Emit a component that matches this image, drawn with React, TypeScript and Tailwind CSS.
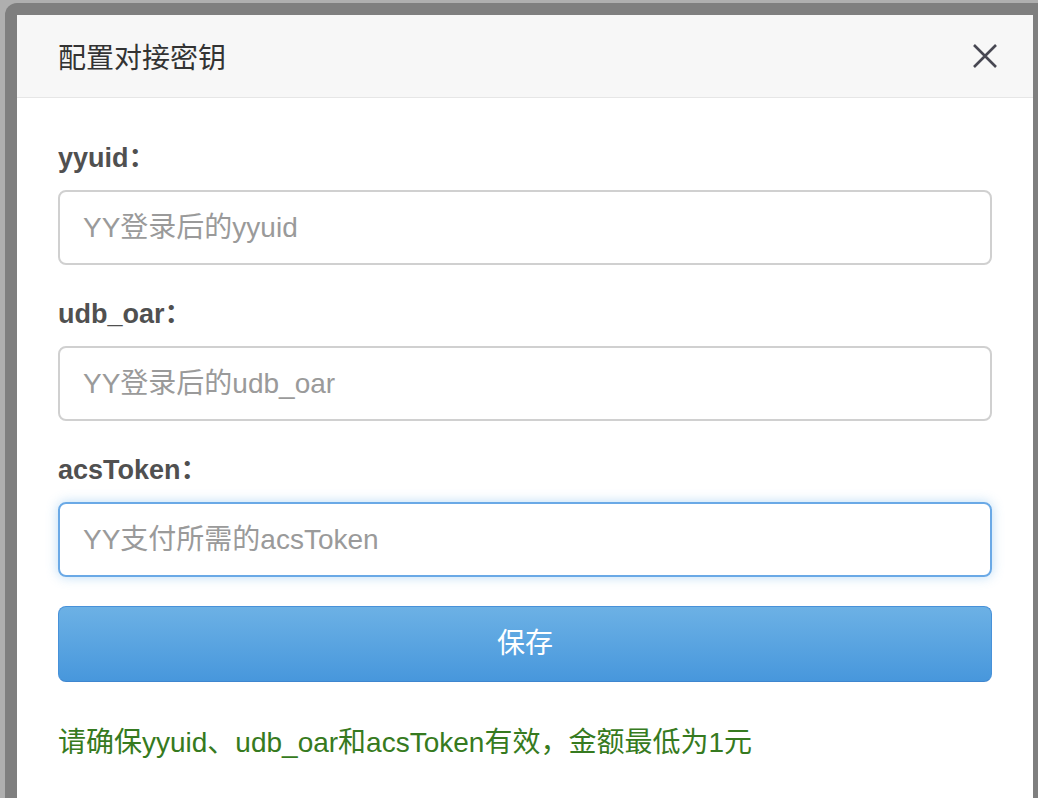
import React from "react";

const fields = [
  { label: "yyuid", placeholder: "YY登录后的yyuid", focused: false },
  { label: "udb_oar", placeholder: "YY登录后的udb_oar", focused: false },
  { label: "acsToken", placeholder: "YY支付所需的acsToken", focused: true },
];

const CloseIcon = () => (
  <svg width="26" height="26" viewBox="0 0 26 26" fill="none">
    <path
      d="M2 2 L24 24 M24 2 L2 24"
      stroke="#474752"
      strokeWidth="2.6"
      strokeLinecap="butt"
    />
  </svg>
);

const App = () => {
  return (
    <div
      className="w-[1038px] h-[798px] overflow-hidden bg-[#afafaf] pl-[5px] pt-[3px]"
      style={{ fontFamily: '"Liberation Sans", "Noto Sans CJK SC", sans-serif' }}
    >
      <div className="h-full bg-[#7f7f7f] rounded-tl-[12px] pl-[12px] pt-[12px] pr-[5px]">
        <div className="h-full bg-white">
          <div className="h-[83px] bg-[#f7f7f7] border-b border-[#e6e6e6] flex items-center justify-between pl-[41px] pr-[35px]">
            <h4 className="text-[28px] leading-[40px] text-[#333] pt-[6px]">配置对接密钥</h4>
            <button className="flex items-center justify-center">
              <CloseIcon />
            </button>
          </div>
          <div className="px-[41px] pt-[40px]">
            {fields.map((field) => (
              <div key={field.label} className="mb-[29px]">
                <label className="block h-[40px] overflow-hidden text-[27px] leading-[40px] font-bold text-[#505050] mb-[12px]">
                  {field.label}：
                </label>
                <input
                  placeholder={field.placeholder}
                  className={
                    field.focused
                      ? "block w-full h-[75px] rounded-[8px] border-2 border-[#6aa9e6] px-[23px] text-[28px] outline-none shadow-[0_0_12px_rgba(102,175,233,0.45)] placeholder:text-[#9a9a9a]"
                      : "block w-full h-[75px] rounded-[8px] border-2 border-[#d0d0d0] px-[23px] text-[28px] outline-none placeholder:text-[#9a9a9a]"
                  }
                />
              </div>
            ))}
            <button className="block w-full h-[76px] mt-[1px] rounded-[8px] border border-[#4791d9] border-b-[#3f86cf] bg-gradient-to-b from-[#6cb1e5] to-[#4797dc] text-white text-[28px]">
              保存
            </button>
            <p className="mt-[41px] h-[40px] text-[28px] leading-[40px] text-[#367a20]">
              请确保yyuid、udb_oar和acsToken有效，金额最低为1元
            </p>
          </div>
        </div>
      </div>
    </div>
  );
};

export default App;
